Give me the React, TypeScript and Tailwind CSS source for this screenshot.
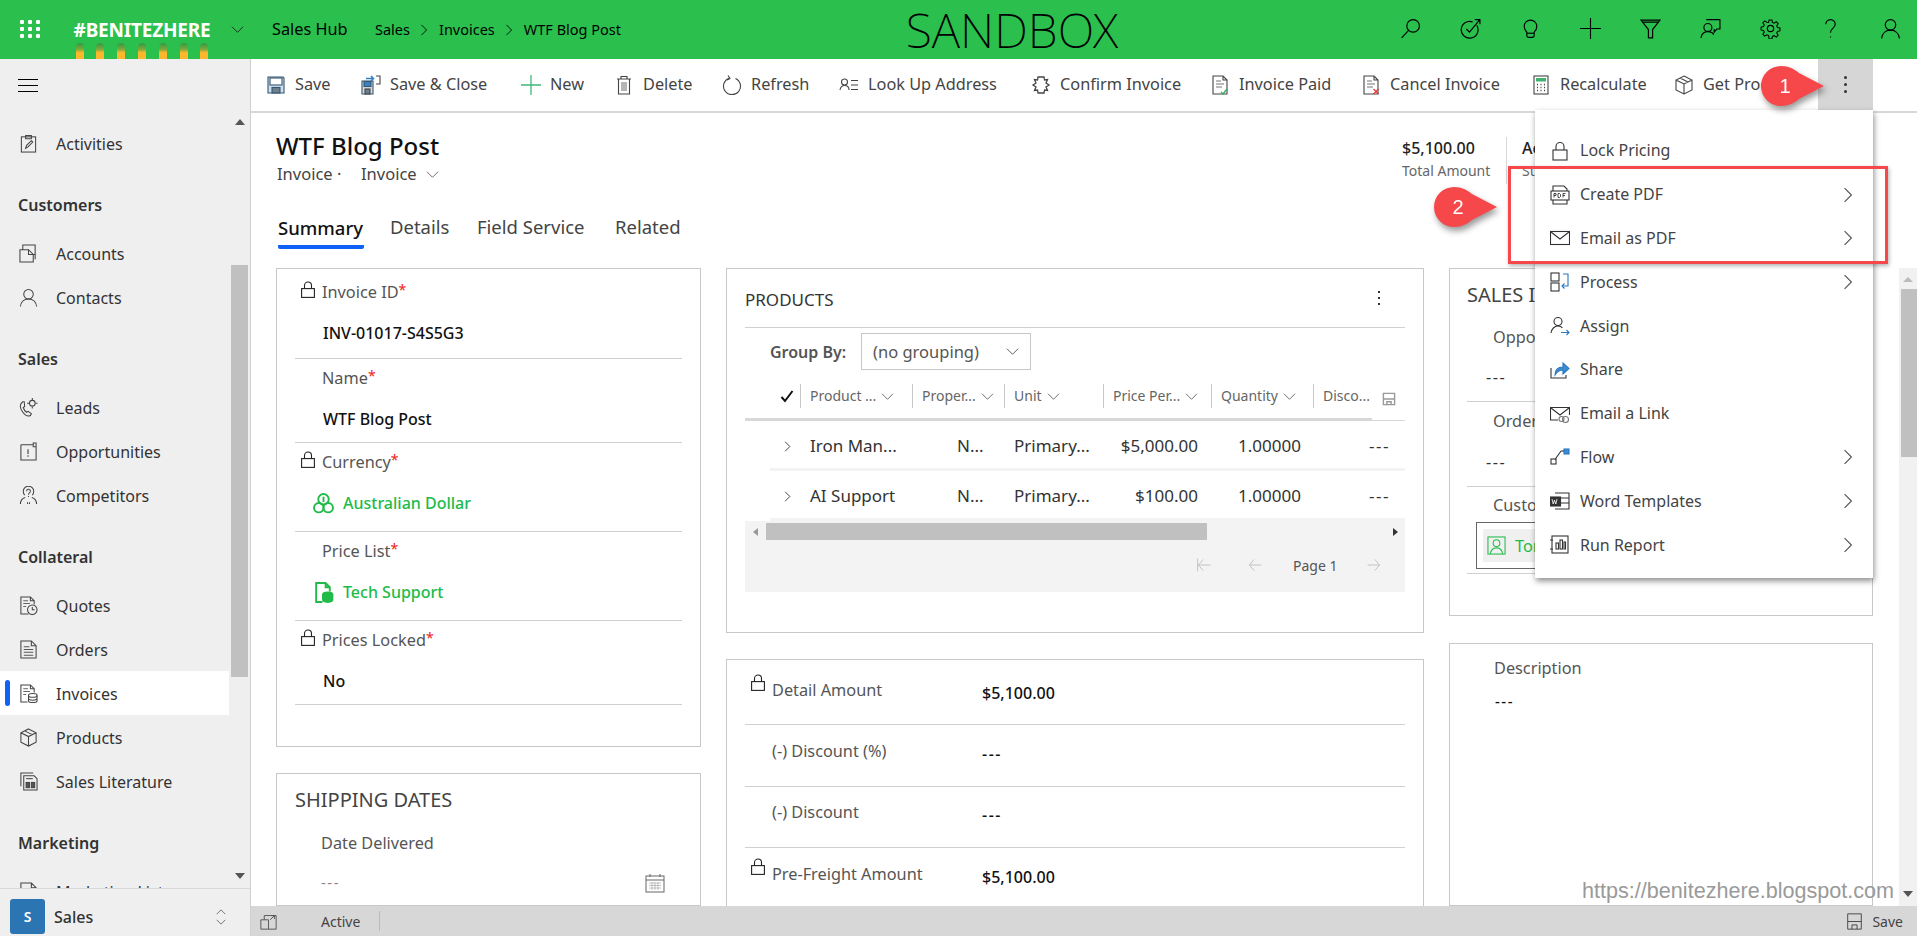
import type { ReactNode } from "react";

function I({ className = "w-5 h-5", sw = 1.1, children }: { className?: string; sw?: number; children: ReactNode }) {
  return (
    <svg viewBox="0 0 20 20" fill="none" stroke="currentColor" strokeWidth={sw} className={`shrink-0 ${className}`}>
      {children}
    </svg>
  );
}

function Lock({ className = "w-[14px] h-[17px]" }: { className?: string }) {
  return (
    <svg viewBox="0 0 14 17" fill="none" stroke="#222" strokeWidth={1.1} className={`shrink-0 ${className}`}>
      <rect x="0.6" y="7.6" width="12.8" height="8.8" />
      <path d="M3.5 7.5V4.5a3.5 3.5 0 0 1 7 0v3" />
    </svg>
  );
}

function Chev({ className = "w-[13px] h-[13px]", dir = "down" }: { className?: string; dir?: "down" | "right" | "left" | "up" }) {
  const d = { down: "M1 4l6 6 6-6", up: "M1 10l6-6 6 6", right: "M4 1l6 6-6 6", left: "M10 1L4 7l6 6" }[dir];
  return (
    <svg viewBox="0 0 14 14" fill="none" stroke="currentColor" strokeWidth={1} className={`shrink-0 ${className}`}>
      <path d={d} />
    </svg>
  );
}

function Callout({ n, className }: { n: string; className: string }) {
  return (
    <div className={`absolute w-[63px] h-[40px] drop-shadow-[2px_4px_3px_rgba(0,0,0,0.4)] ${className}`}>
      <svg viewBox="0 0 63 40" className="absolute inset-0 w-full h-full">
        <path d="M20 0C28 0 33 3 38 7L63 20 38 33C33 37 28 40 20 40A20 20 0 0 1 20 0Z" fill="#f6484b" />
      </svg>
      <span className="absolute left-0 top-0 w-[48px] h-[40px] flex items-center justify-center text-white text-[20px] font-['Liberation_Sans',sans-serif]">
        {n}
      </span>
    </div>
  );
}

const topIcons: ReactNode[] = [
  <><circle cx="12.5" cy="7.5" r="6" /><path d="M8.2 11.8L1.5 19" /></>,
  <><path d="M16 7a8 8 0 1 1-4-3.3" /><path d="M6 10.5l3 3L18.5 2M14 1.5h5V6" /></>,
  <><path d="M6.5 13.5C5 12 4 10.5 4 8a6 6 0 0 1 12 0c0 2.5-1 4-2.5 5.5v3a2 2 0 0 1-2 2h-3a2 2 0 0 1-2-2z" /><path d="M6.5 14.5h7" /></>,
  <path d="M10 0v20M0 10h20" />,
  <path d="M1 2h18l-7 9v8H8v-8z M3 4h14" />,
  <><circle cx="7.5" cy="9" r="3.8" /><path d="M1 19c.5-4 3-6 6.500-6s5 1.500 5.500 3M6 1.500h13v9h-3l-2.500 3v-3" /></>,
  <><circle cx="10" cy="10" r="3" /><path d="M8.500 1h3l.5 2.600 1.800.8 2.300-1.500 2 2-1.500 2.300.8 1.800 2.600.5v3l-2.600.5-.8 1.800 1.500 2.300-2 2-2.300-1.500-1.800.8-.5 2.600h-3L8 17.400l-1.800-.8-2.300 1.500-2-2 1.500-2.300-.8-1.800L0 11.500v-3l2.600-.5.8-1.800-1.500-2.300 2-2 2.300 1.500L8 3.600z" transform="translate(1 1) scale(.9)" /></>,
  <><path d="M5.500 6a4.500 4.500 0 0 1 9 0c0 3.500-4.500 4-4.500 8" /><path d="M10 17.500v1" /></>,
  <><circle cx="10" cy="6.500" r="5" /><path d="M1.500 19.500c.5-5 4-8 8.500-8s8 3 8.500 8" /></>,
];

const tools: { label: string; w: string; icon: ReactNode }[] = [
  { label: "Save", w: "w-[95px]", icon: <><path d="M2 2h15l1 1v15H2z" fill="#cfe0ef" stroke="#35566f" /><rect x="4" y="3" width="12" height="7" fill="#fff" stroke="#35566f" /><rect x="6" y="12.500" width="8" height="5.500" fill="#6d7f8c" stroke="#35566f" /></> },
  { label: "Save & Close", w: "w-[160px]", icon: <><path d="M1 6h11v13H1z" fill="#d5dde4" stroke="#35566f" /><rect x="3" y="6.500" width="7" height="5" fill="#3b82c4" stroke="#35566f" /><rect x="4" y="14" width="5" height="5" fill="#6d7f8c" /><path d="M5 3.500h7M10 1l2.500 2.500L10 6" stroke="#2d7fc6" strokeWidth="1.500" /><path d="M15 1h4v8h-4" stroke="#444" /></> },
  { label: "New", w: "w-[93px]", icon: <path d="M10 0v20M0 10h20" stroke="#3fb878" strokeWidth="1.300" /> },
  { label: "Delete", w: "w-[108px]", icon: <><path d="M3 4h14M7 4V1.500h6V4M4.500 4v15h11V4" /><path d="M8 7v9M10 7v9M12 7v9" stroke="#777" /></> },
  { label: "Refresh", w: "w-[117px]", icon: <><path d="M7 3.200a8.500 8.500 0 1 0 6.500.2" /><path d="M6 .5l2 3-3 1.500" /></> },
  { label: "Look Up Address", w: "w-[192px]", icon: <><circle cx="5.500" cy="7" r="3" /><path d="M1 15c.5-3 2-4.500 4.500-4.500S10 12 10 15M12 5.500h7M12 10h7M12 14.500h7" /></> },
  { label: "Confirm Invoice", w: "w-[179px]", icon: <path d="M7 2h6l.5 3 3-.5L15 8l3 2-3 2 1.500 3.500-3-.5-.5 3H7l-.5-3-3 .5L5 12l-3-2 3-2-1.500-3.500 3 .5z" strokeWidth="1.300" /> },
  { label: "Invoice Paid", w: "w-[151px]", icon: <><path d="M3 1h10l4 4v14H3zM13 1v4h4" /><path d="M6 6h5M6 9h8M6 12h6" stroke="#777" /><path d="M11 17l2 2 4-5" stroke="#2fae5c" strokeWidth="1.300" /></> },
  { label: "Cancel Invoice", w: "w-[170px]", icon: <><path d="M3 1h10l4 4v14H3zM13 1v4h4" /><path d="M6 6h5M6 9h8M6 12h6" stroke="#777" /><path d="M12.500 14l5 5M17.500 14l-5 5" stroke="#e53c3c" strokeWidth="1.300" /></> },
  { label: "Recalculate", w: "w-[143px]", icon: <><rect x="3" y="1" width="14" height="18" /><rect x="5" y="3" width="10" height="3.500" fill="#42b06e" stroke="none" /><path d="M6 9.500h1M9.500 9.500h1M13 9.500h1M6 12.500h1M9.500 12.500h1M13 12.500h1M6 15.500h1M9.500 15.500h1M13 15.500h1" strokeWidth="1.500" /></> },
  { label: "Get Products", w: "w-[144px]", icon: <><path d="M10 1l8 4v10l-8 4-8-4V5z M2 5l8 4 8-4M10 9v10M6 3l8 4" /></> },
];

const menuItems: { label: string; more?: boolean; icon: ReactNode }[] = [
  { label: "Lock Pricing", icon: <><rect x="3" y="9" width="14" height="10" /><path d="M6 9V5.500a4 4 0 0 1 8 0V9" /></> },
  { label: "Create PDF", more: true, icon: <><path d="M3 6V1h11l3 3v2M3 15v4h14v-4" /><rect x="1" y="6" width="18" height="9" /><path d="M4 12.500V8.500h2v2H4M8 8.500v4h1.500l1-1v-2l-1-1zM13 12.500v-4h2.500M13 10.500h2" strokeWidth=".9" /></> },
  { label: "Email as PDF", more: true, icon: <><rect x="0.500" y="3.500" width="19" height="13" /><path d="M1 4l9 7 9-7" /></> },
  { label: "Process", more: true, icon: <><rect x="1" y="1" width="8" height="8" /><rect x="1" y="11" width="8" height="8" /><path d="M13 2h5v12h-6" stroke="#2878c0" /><path d="M14.500 11.500L12 14l2.500 2.500" stroke="#2878c0" /></> },
  { label: "Assign", icon: <><circle cx="8" cy="5.500" r="4" /><path d="M1 17c.5-4 3.500-7 7-7 2 0 3.500.7 4.500 2" /><path d="M11 16.500h8M16.500 14l2.500 2.500-2.500 2.500" stroke="#2878c0" /></> },
  { label: "Share", icon: <><path d="M1 8v10h15v-3" /><path d="M5 15c0-5 3-8 8-8V3l6 5.500-6 5.500v-4c-4 0-6 1.500-8 5z" fill="#3f8bd0" stroke="#2878c0" /></> },
  { label: "Email a Link", icon: <><path d="M8 16H.5V3.500h19V11" /><path d="M1 4l9 7 9-7" /><circle cx="11.500" cy="15" r="2.500" stroke="#777" /><circle cx="15.500" cy="15.500" r="3" stroke="#777" /></> },
  { label: "Flow", more: true, icon: <><rect x="1" y="12" width="5" height="5" /><path d="M5 12.500L11 4" /><rect x="14" y="2" width="5" height="5" fill="#3f8bd0" stroke="#2878c0" /><path d="M11 4h3" /></> },
  { label: "Word Templates", more: true, icon: <><path d="M5 2h14v16H5M5 7h14M5 12h14" /><rect x="0.500" y="6" width="10" height="9" fill="#333" stroke="#333" /><path d="M2 8l1.200 5 1.300-4 1.300 4 1.200-5" stroke="#fff" strokeWidth=".8" /></> },
  { label: "Run Report", more: true, icon: <><rect x="2" y="1" width="16" height="17" /><path d="M0 5h3M0 14h3" /><rect x="6" y="8" width="2.500" height="6" /><rect x="10" y="5" width="2.500" height="9" /><rect x="14" y="7" width="1.500" height="7" /></> },
];

type NavEntry = { head: string } | { label: string; active?: boolean; icon: ReactNode };

const nav: NavEntry[] = [
  { label: "Activities", icon: <><rect x="2.500" y="3" width="15" height="16" /><path d="M7 5V1.500h6V5zM7 15l1-3 5-5 1.500 1.500-5 5z" /></> },
  { head: "Customers" },
  { label: "Accounts", icon: <><path d="M4 6V1h13v15M1 6h9l5 5v8H1z" /><path d="M10 6v5h7" /></> },
  { label: "Contacts", icon: <><circle cx="10" cy="6.500" r="5" /><path d="M1.500 19.500c.5-5 4-8 8.500-8s8 3 8.500 8" /></> },
  { head: "Sales" },
  { label: "Leads", icon: <><path d="M4 4C1 6 0 10 4 15c3 4 6 4.500 8 3.500l1-2-3.500-2.500-1.500 1c-1.500-1-3-3-3.500-5l1.500-1L5.500 4z" /><circle cx="14" cy="5.500" r="3" /><path d="M14 0v2M14 9v2M8.500 5.500h2M17.500 5.500h2" /></> },
  { label: "Opportunities", icon: <><path d="M2 3h13M15 3v2h3V1h-3v2M18 5v14H2V3" /><path d="M9.500 7.500v5M9.500 14v1.500" strokeWidth="1.200" /></> },
  { label: "Competitors", icon: <><path d="M6 9.500a5.500 5.500 0 1 1 8 0M6.500 12C3 13 1.500 15 1.500 19M13.500 12c3.500 1 5 3 5 7M9 17v2M11 17v2" /><path d="M8 5.500a2 2 0 1 1 3 1.700c-1 .6-1 1-1 2M10 10.500v1" /></> },
  { head: "Collateral" },
  { label: "Quotes", icon: <><path d="M10 19H2V1h10l4 4v4M12 1v4h4" /><path d="M4.500 5h5M4.500 8h7M4.500 11h3" stroke="#666" /><circle cx="14" cy="14.500" r="5" /><path d="M14 11.500v3h2.500" /></> },
  { label: "Orders", icon: <><path d="M2 1h11l5 5v13H2zM13 1v5h5" /><path d="M5 7h6M5 10h10M5 13h10M5 16h10" stroke="#555" /></> },
  { label: "Invoices", active: true, icon: <><path d="M9 19H2V1h10l4 4v4M12 1v4h4" /><path d="M4.500 5h5M4.500 8h7M4.500 11h3" stroke="#666" /><ellipse cx="14.500" cy="12" rx="4.500" ry="2" /><path d="M10 12v5.500c0 1 2 2 4.500 2s4.500-1 4.500-2V12M10 15c0 1 2 2 4.500 2s4.500-1 4.500-2" /></> },
  { label: "Products", icon: <path d="M10 1l8 4v10l-8 4-8-4V5z M2 5l8 4 8-4M10 9v10M6 3l8 4" /> },
  { label: "Sales Literature", icon: <><path d="M2 15V1h13" /><path d="M5 4h11l3 3v12H5z" /><path d="M7.500 7h7" /><rect x="7.500" y="11" width="3.500" height="5.500" fill="#555" /><rect x="13" y="11" width="3.500" height="5.500" fill="#555" /></> },
  { head: "Marketing" },
  { label: "Marketing Lists", icon: <><path d="M2 1h11l5 5v13H2zM13 1v5h5" /><path d="M5 7h6M5 10h10" stroke="#555" /></> },
];

function Sidebar() {
  return (
    <aside className="w-[251px] shrink-0 bg-[#efefef] border-r border-[#d0d0d0] flex flex-col overflow-hidden">
      <div className="h-[51px] shrink-0 flex flex-col justify-center gap-[5px] pl-[18px] pt-[1px]">
        <div className="w-[20px] h-px bg-black" />
        <div className="w-[20px] h-px bg-black" />
        <div className="w-[20px] h-px bg-black" />
      </div>
      <div className="flex-1 min-h-0 flex overflow-hidden">
        <div className="w-[229px] pt-[11px] overflow-hidden">
          {nav.map((n) =>
            "head" in n ? (
              <div key={n.head} className="h-[66px] pt-[14px] pl-[18px] flex items-center text-[16px] font-semibold text-[#333]">
                {n.head}
              </div>
            ) : (
              <div key={n.label} className={`h-[44px] relative flex items-center pl-[19px] text-[16px] text-[#333] ${n.active ? "bg-white" : ""}`}>
                {n.active && <div className="absolute left-[5px] top-[9px] w-[5px] h-[26px] rounded-[3px] bg-[#0f62f5]" />}
                <I className="w-[19px] h-[19px] text-[#444]">{n.icon}</I>
                <span className="ml-[18px] pt-[2px] whitespace-nowrap">{n.label}</span>
              </div>
            ),
          )}
        </div>
        <div className="w-[17px] ml-[2px] flex flex-col items-center">
          <div className="mt-[9px] w-0 h-0 border-x-[5px] border-x-transparent border-b-[6px] border-b-[#555]" />
          <div className="mt-[140px] w-full h-[412px] bg-[#c0c0c0]" />
          <div className="mt-[196px] w-0 h-0 border-x-[5px] border-x-transparent border-t-[6px] border-t-[#555]" />
        </div>
      </div>
      <div className="h-[48px] shrink-0 border-t border-[#d8d8d8] flex items-start pt-[10px] pl-[10px] pr-[22px]">
        <div className="w-[35px] h-[35px] rounded-[3px] bg-[#2b75b3] text-white text-[14px] font-semibold flex items-center justify-center">S</div>
        <span className="ml-[9px] h-[35px] flex items-center text-[16px] font-medium text-[#333] flex-1">Sales</span>
        <div className="h-[35px] flex flex-col justify-center text-[#444]">
          <Chev dir="up" className="w-[14px] h-[10px]" />
          <Chev className="w-[14px] h-[10px]" />
        </div>
      </div>
    </aside>
  );
}

function Label({ text, req }: { text: string; req?: boolean }) {
  return (
    <span className="text-[16.300px] text-[#555] whitespace-nowrap">
      {text}
      {req && <sup className="text-[#f02020] text-[14px] top-[-3px]">*</sup>}
    </span>
  );
}

function Field({ h, pt = "pt-[7px]", lock, label, req, children }: { h: string; pt?: string; lock?: boolean; label: string; req?: boolean; children: ReactNode }) {
  return (
    <div className={`border-b border-[#d0d0d0] ${h} ${pt}`}>
      <div className="h-[24px] flex items-center">
        <div className="w-[27px] pl-[6px] flex justify-start -mt-[5px]">{lock && <Lock />}</div>
        <Label text={label} req={req} />
      </div>
      <div className="mt-[17px] h-[24px] flex items-center pl-[28px] text-[16px] font-medium text-[#111]">{children}</div>
    </div>
  );
}

function MidRow({ h, pt, lock, label, value }: { h: string; pt: string; lock?: boolean; label: string; value: string }) {
  return (
    <div className={`${h} ${pt} flex items-start border-b border-[#d0d0d0] last:border-b-0`}>
      <div className="w-[27px] pl-[6px] h-[24px] -mt-[4px]">{lock && <Lock />}</div>
      <div className="w-[210px] h-[24px] flex items-center"><Label text={label} /></div>
      <div className={`mt-[3px] h-[24px] flex items-center text-[16px] font-medium text-[#111] ${value === "---" ? "tracking-[1.500px]" : ""}`}>{value}</div>
    </div>
  );
}

const cols = "grid grid-cols-[55px_112px_92px_99px_108px_102px_92px]";

function HeadCell({ text, className = "" }: { text: string; className?: string }) {
  return (
    <div className={`h-[24px] border-l border-[#c8c8c8] flex items-center pl-[9px] text-[14px] text-[#666] whitespace-nowrap ${className}`}>
      <span className="-mt-[1px]">{text}</span>
      <Chev className="w-[13px] h-[13px] ml-[5px] text-[#666]" />
    </div>
  );
}

function ProductRow({ name, price }: { name: string; price: string }) {
  return (
    <div className={`${cols} h-[50px] items-center text-[17px] text-[#333]`}>
      <div className="pl-[37px]"><Chev dir="right" className="w-[11px] h-[11px] text-[#111]" /></div>
      <div className="pl-[10px] whitespace-nowrap">{name}</div>
      <div className="pl-[45px]">N...</div>
      <div className="pl-[10px] whitespace-nowrap">Primary...</div>
      <div className="text-right pr-[13px]">{price}</div>
      <div className="text-right pr-[12px]">1.00000</div>
      <div className="text-right pr-[15px] tracking-[1.500px]">---</div>
    </div>
  );
}

function Products() {
  return (
    <section className="h-[365px] shrink-0 border border-[#c8c8c8] px-[18px]">
      <div className="h-[59px] border-b border-[#d0d0d0] flex items-center justify-between pt-[3px]">
        <span className="text-[17px] text-[#333]">PRODUCTS</span>
        <div className="flex flex-col gap-[4px] mr-[25px] -mt-[3px]">
          <div className="w-[2px] h-[2px] bg-[#333]" />
          <div className="w-[2px] h-[2px] bg-[#333]" />
          <div className="w-[2px] h-[2px] bg-[#333]" />
        </div>
      </div>
      <div className="pl-[25px] pt-[5px] flex items-center">
        <span className="w-[91px] text-[16px] font-semibold text-[#555] whitespace-nowrap">Group By:</span>
        <div className="w-[170px] h-[37px] border border-[#c8c8c8] flex items-center justify-between px-[11px] text-[16.500px] text-[#555] whitespace-nowrap">
          <span className="pt-[1px]">(no grouping)</span>
          <Chev className="w-[13px] h-[13px] text-[#555]" />
        </div>
      </div>
      <div className={`${cols} mt-[14px] h-[24px] relative`}>
        <div className="pl-[35px] flex items-center">
          <svg viewBox="0 0 14 14" className="w-[14px] h-[14px]" fill="none" stroke="#111" strokeWidth="2"><path d="M1.500 8l3.500 4 7.500-10" /></svg>
        </div>
        <HeadCell text="Product ..." />
        <HeadCell text="Proper..." />
        <HeadCell text="Unit" />
        <HeadCell text="Price Per..." />
        <HeadCell text="Quantity" />
        <div className="h-[24px] border-l border-[#c8c8c8] flex items-center pl-[9px] text-[14px] text-[#666] justify-between">
          <span className="-mt-[1px]">Disco...</span>
          <I className="w-[14px] h-[14px] mt-[6px] text-[#999] mr-[9px]" sw={2}><path d="M2 2h16v16H2zM2 10h16M7 18v-4h6v4" /></I>
        </div>
      </div>
      <div className="mt-[10px] border-b border-[#d8d8d8] h-[3px]">
        <div className="w-[627px] h-[3px] bg-[#d8d8d8]" />
      </div>
      <ProductRow name="Iron Man..." price="$5,000.00" />
      <div className="ml-[25px] h-[3px] bg-[#f3f3f3] -mt-[3px]" />
      <ProductRow name="AI Support" price="$100.00" />
      <div className="ml-[25px] h-[3px] bg-[#f3f3f3] -mt-[3px]" />
      <div className="h-[71px] bg-[#f3f3f3]">
        <div className="pt-[2px] h-[19px] flex items-center">
          <div className="w-[21px] flex justify-center"><div className="w-0 h-0 border-y-[4px] border-y-transparent border-r-[5px] border-r-[#999]" /></div>
          <div className="w-[441px] h-[17px] bg-[#c0c0c0]" />
          <div className="ml-auto w-[20px] flex justify-center"><div className="w-0 h-0 border-y-[4px] border-y-transparent border-l-[5px] border-l-[#333]" /></div>
        </div>
        <div className="h-[50px] flex items-center text-[#bdbdbd]">
          <I className="w-[16px] h-[16px] ml-[451px]"><path d="M2 2v16M18 10H3M9 3l-6 7 6 7" /></I>
          <I className="w-[16px] h-[16px] ml-[35px]"><path d="M18 10H3M9 3l-6 7 6 7" /></I>
          <span className="ml-[30px] text-[14px] text-[#555] pt-[1px] w-[43px] whitespace-nowrap">Page 1</span>
          <I className="w-[16px] h-[16px] ml-[30px]"><path d="M2 10h15M11 3l6 7-6 7" /></I>
        </div>
      </div>
    </section>
  );
}

function Menu() {
  return (
    <div className="absolute left-[1535px] top-[110px] w-[338px] h-[468px] bg-white pt-[19px] shadow-[1px_3px_6px_rgba(0,0,0,0.45)]">
      {menuItems.map((m) => (
        <div key={m.label} className="h-[43.800px] flex items-center pl-[15px] pr-[17px] text-[16px] text-[#444]">
          <I className="w-[20px] h-[20px] text-[#333]">{m.icon}</I>
          <span className="ml-[10px] flex-1 -mt-[1px]">{m.label}</span>
          {m.more && <Chev dir="right" className="w-[16px] h-[16px] text-[#555]" />}
        </div>
      ))}
    </div>
  );
}

export default function App() {
  return (
    <div className="relative w-full h-screen overflow-hidden flex flex-col bg-white font-['Noto_Sans',sans-serif]">
      <header className="h-[59px] shrink-0 bg-[#2bc04d] flex items-center text-black overflow-hidden">
        <div className="w-[895px] shrink-0 flex items-center">
          <div className="ml-[20px] grid grid-cols-3 gap-x-[4px] gap-y-[3px] -mt-[2px]">
            {[0, 1, 2, 3, 4, 5, 6, 7, 8].map((i) => (
              <div key={i} className="w-[4px] h-[4px] rounded-[1px] bg-white" />
            ))}
          </div>
          <div className="ml-[33px] w-[138px] h-[59px] flex flex-col pt-[17px] items-center">
            <span className="h-[26px] text-[19px] leading-[26px] font-bold text-white whitespace-nowrap tracking-[-0.200px]">#BENITEZHERE</span>
            <div className="flex gap-[12.800px]">
              {[0, 1, 2, 3, 4, 5, 6].map((i) => (
                <div key={i} className="w-[8px] h-[16px] rounded-t-full bg-[linear-gradient(#2f9a45_0%,#7fa83a_40%,#fbb82d_60%)]" />
              ))}
            </div>
          </div>
          <Chev className="w-[13px] h-[13px] ml-[20px] text-[#222]" />
          <span className="ml-[28px] w-[103px] text-[16.300px] whitespace-nowrap">Sales Hub</span>
          <span className="text-[14.500px]">Sales</span>
          <Chev dir="right" className="w-[12px] h-[12px] ml-[8px]" />
          <span className="ml-[9px] text-[14.500px]">Invoices</span>
          <Chev dir="right" className="w-[12px] h-[12px] ml-[8px]" />
          <span className="ml-[9px] text-[14.500px] whitespace-nowrap">WTF Blog Post</span>
        </div>
        <span className="w-[234px] h-[59px] shrink-0 flex items-center justify-center text-[48px] font-extralight leading-[59px] whitespace-nowrap">SANDBOX</span>
        <div className="ml-[251px] flex shrink-0 -mt-[3px]">
          {topIcons.map((ic, i) => (
            <div key={i} className="w-[60px] flex justify-center">
              <I className="w-[21px] h-[21px]">{ic}</I>
            </div>
          ))}
        </div>
      </header>

      <div className="flex-1 min-h-0 flex">
        <Sidebar />
        <main className="flex-1 min-w-0 flex flex-col">
          <div className="h-[54px] shrink-0 border-b-2 border-[#d8d8d8] flex items-center pl-[15px] overflow-hidden">
            <div className="w-[1552px] shrink-0 flex overflow-hidden">
              {tools.map((t) => (
                <div key={t.label} className={`${t.w} shrink-0 flex items-center whitespace-nowrap text-[16.300px] text-[#444]`}>
                  <I className="w-[20px] h-[20px] text-[#444]">{t.icon}</I>
                  <span className="ml-[9px] -mt-[1px]">{t.label}</span>
                </div>
              ))}
            </div>
            <div className="w-[55px] h-[52px] bg-[#d6d6d6] flex flex-col items-center justify-center gap-[4px] shrink-0 -mt-[2px]">
              <div className="w-[3px] h-[3px] rounded-full bg-[#333]" />
              <div className="w-[3px] h-[3px] rounded-full bg-[#333]" />
              <div className="w-[3px] h-[3px] rounded-full bg-[#333]" />
            </div>
          </div>

          <div className="h-[155px] shrink-0 pl-[25px]">
            <div className="flex h-[92px]">
              <div className="w-[1126px] pt-[15px]">
                <div className="text-[24px] leading-[34px] font-medium text-[#111] mt-[1px]">WTF Blog Post</div>
                <div className="h-[22px] flex items-center text-[16.500px] text-[#444]">
                  <span className="w-[85px] pl-[1px] whitespace-nowrap">Invoice ·</span>
                  <span>Invoice</span>
                  <Chev className="w-[13px] h-[13px] ml-[9px] text-[#666]" />
                </div>
              </div>
              <div className="pt-[24px] flex items-start">
                <div className="w-[104px]">
                  <div className="h-[22px] text-[16px] font-medium text-[#222] leading-[22px]">$5,100.00</div>
                  <div className="h-[24px] text-[14px] text-[#666] leading-[24px] whitespace-nowrap">Total Amount</div>
                </div>
                <div className="h-[47px] w-px bg-[#d8d8d8]" />
                <div className="w-[354px] pl-[15px]">
                  <div className="h-[22px] text-[16px] font-medium text-[#222] leading-[22px]">Active</div>
                  <div className="h-[24px] text-[14px] text-[#666] leading-[24px]">Status Reason</div>
                </div>
                <Chev className="w-[20px] h-[20px] mt-[13px] -ml-[10px] text-[#444]" />
              </div>
            </div>
            <div className="flex h-[44px] text-[18.500px] text-[#444] pl-[2px]">
              <div className="w-[112px] shrink-0">
                <div className="w-[86px] h-[44px] flex items-center text-[#111] font-medium border-b-[4px] border-[#0f62f5] rounded-b-[2px] pt-[6px] whitespace-nowrap">Summary</div>
              </div>
              <div className="w-[87px] shrink-0 h-[44px] flex items-center">Details</div>
              <div className="w-[138px] shrink-0 h-[44px] flex items-center whitespace-nowrap">Field Service</div>
              <div className="h-[44px] flex items-center">Related</div>
            </div>
          </div>

          <div className="flex-1 min-h-0 flex overflow-hidden">
            <div className="flex gap-[25px] pl-[25px] w-[1648px] shrink-0">
              <div className="w-[425px] shrink-0 flex flex-col gap-[26px]">
                <section className="h-[479px] shrink-0 border border-[#c8c8c8] px-[18px]">
                  <Field h="h-[90px]" pt="pt-[11px]" lock label="Invoice ID" req>INV-01017-S4S5G3</Field>
                  <Field h="h-[84px]" label="Name" req>WTF Blog Post</Field>
                  <Field h="h-[89px]" lock label="Currency" req>
                    <div className="-ml-[10px] flex items-center text-[#22bb4a]">
                      <I className="w-[21px] h-[21px] mr-[9px]" sw={1.800}><circle cx="10" cy="6" r="5" /><circle cx="5.500" cy="14" r="4.500" /><circle cx="14.500" cy="14" r="4.500" /><path d="M10 3.500v5" /></I>
                      <span className="whitespace-nowrap">Australian Dollar</span>
                    </div>
                  </Field>
                  <Field h="h-[89px]" label="Price List" req>
                    <div className="-ml-[10px] flex items-center text-[#22bb4a]">
                      <I className="w-[21px] h-[21px] mr-[9px]" sw={1.800}><path d="M9 19H3V1h9l4 4v4M12 1v4h4" /><ellipse cx="14" cy="12" rx="4.500" ry="2" fill="currentColor" /><path d="M9.500 12v5c0 1 2 2 4.500 2s4.500-1 4.500-2v-5" fill="currentColor" /></I>
                      <span className="whitespace-nowrap">Tech Support</span>
                    </div>
                  </Field>
                  <Field h="h-[84px]" lock label="Prices Locked" req>No</Field>
                </section>
                <section className="flex-1 border border-[#c8c8c8] px-[18px]">
                  <div className="mt-[13px] text-[20px] leading-[26px] text-[#444]">SHIPPING DATES</div>
                  <div className="mt-[18px] pl-[26px] text-[16.300px] text-[#555]">Date Delivered</div>
                  <div className="mt-[16px] pl-[26px] pr-[17px] flex items-center justify-between text-[15px] text-[#888] tracking-[1.500px]">
                    <span>---</span>
                    <svg viewBox="0 0 20 20" className="w-[20px] h-[20px]" fill="none" stroke="#666"><rect x="1" y="3" width="18" height="16" /><path d="M1 7h18M5 1v3M15 1v3" /><path d="M4 10h12M4 12.500h12M4 15h12M7 9v8M10 9v8M13 9v8" stroke="#aaa" strokeWidth=".7" /></svg>
                  </div>
                </section>
              </div>

              <div className="w-[698px] shrink-0 flex flex-col gap-[26px]">
                <Products />
                <section className="flex-1 border border-[#c8c8c8] px-[18px]">
                  <MidRow h="h-[65px]" pt="pt-[18px]" lock label="Detail Amount" value="$5,100.00" />
                  <MidRow h="h-[62px]" pt="pt-[14px]" label="(-) Discount (%)" value="---" />
                  <MidRow h="h-[61px]" pt="pt-[13px]" label="(-) Discount" value="---" />
                  <MidRow h="h-[61px]" pt="pt-[14px]" lock label="Pre-Freight Amount" value="$5,100.00" />
                </section>
              </div>

              <div className="w-[424px] shrink-0 flex flex-col gap-[27px]">
                <section className="h-[348px] shrink-0 border border-[#c8c8c8] px-[17px]">
                  <div className="mt-[13px] text-[20px] leading-[26px] text-[#444] whitespace-nowrap">SALES INFORMATION</div>
                  <div className="mt-[17px] h-[77px] border-b border-[#d0d0d0] pl-[26px] text-[16.300px] text-[#555]">
                    Opportunity
                    <div className="mt-[16px] -ml-[7px] text-[#333] tracking-[1.500px]">---</div>
                  </div>
                  <div className="h-[85px] border-b border-[#d0d0d0] pl-[26px] pt-[7px] text-[16.300px] text-[#555]">
                    Order
                    <div className="mt-[17px] -ml-[7px] text-[#333] tracking-[1.500px]">---</div>
                  </div>
                  <div className="h-[87px] border-b border-[#d0d0d0] pl-[26px] pt-[6px] text-[16.300px] text-[#555]">
                    Customer
                    <div className="mt-[5px] -ml-[17px] w-[300px] h-[47px] border border-[#666] p-[6px] ">
                      <div className="h-full bg-[#f0f0f0] flex items-center pl-[4px] text-[#22bb4a]">
                        <I className="w-[19px] h-[19px] mr-[9px]"><rect x="1" y="1" width="18" height="18" /><circle cx="10" cy="7.500" r="3.500" /><path d="M3.500 19c.5-4 3-6.500 6.500-6.500s6 2.500 6.500 6.500" /></I>
                        Tony Stark
                      </div>
                    </div>
                  </div>
                </section>
                <section className="flex-1 border border-[#c8c8c8] pl-[44px]">
                  <div className="mt-[12px] text-[16.300px] text-[#555]">Description</div>
                  <div className="mt-[10px] text-[15px] font-medium text-[#111] pl-[1px] tracking-[1.500px]">---</div>
                </section>
              </div>
            </div>

            <div className="ml-auto w-[18px] shrink-0 bg-[#f1f1f1] flex flex-col items-center">
              <div className="mt-[9px] w-0 h-0 border-x-[5px] border-x-transparent border-b-[5px] border-b-[#bbb]" />
              <div className="mt-[7px] ml-[2px] w-[16px] h-[168px] bg-[#c0c0c0]" />
              <div className="mt-[434px] w-0 h-0 border-x-[5px] border-x-transparent border-t-[6px] border-t-[#555]" />
            </div>
          </div>

          <footer className="h-[30px] shrink-0 bg-[#d7d7d7] flex items-center text-[14px] text-[#444]">
            <I className="w-[17px] h-[17px] ml-[9px] text-[#555]"><path d="M1 8h9v11H1zM5 8V3h14v16h-9" /><path d="M12 8l5-5M13 3h4v4" /></I>
            <span className="ml-[44px] pt-[1px] w-[41px]">Active</span>
            <div className="ml-[17px] w-px h-[20px] bg-[#bbb]" />
            <I className="w-[17px] h-[19px] ml-auto text-[#444]"><path d="M2 1h16v18H2zM2 10h16M7 19v-5h6v5" /></I>
            <span className="ml-[9px] mr-[14px]">Save</span>
          </footer>
        </main>
      </div>

      <Menu />
      <div className="absolute left-[1508px] top-[166px] w-[380px] h-[98px] border-[3px] border-[#f6484b] shadow-[1px_2px_4px_rgba(0,0,0,0.3)]" />
      <Callout n="1" className="left-[1761px] top-[66px]" />
      <Callout n="2" className="left-[1434px] top-[187px]" />
      <div className="absolute left-[1582px] top-[878px] text-[21.600px] leading-[26px] text-[#9a9a9a] font-['Liberation_Sans',sans-serif] whitespace-nowrap">
        https://benitezhere.blogspot.com
      </div>
    </div>
  );
}
